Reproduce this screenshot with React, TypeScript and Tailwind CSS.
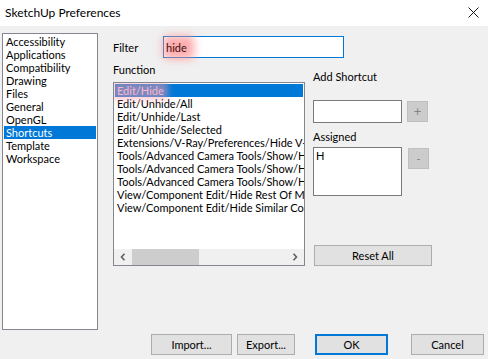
import React from "react";

const leftItems = [
  "Accessibility",
  "Applications",
  "Compatibility",
  "Drawing",
  "Files",
  "General",
  "OpenGL",
  "Shortcuts",
  "Template",
  "Workspace",
];

const functions = [
  "Edit/Hide",
  "Edit/Unhide/All",
  "Edit/Unhide/Last",
  "Edit/Unhide/Selected",
  "Extensions/V-Ray/Preferences/Hide V-Ray Toolbars",
  "Tools/Advanced Camera Tools/Show/Hide Cameras",
  "Tools/Advanced Camera Tools/Show/Hide Frustum Lines",
  "Tools/Advanced Camera Tools/Show/Hide Frustum Volumes",
  "View/Component Edit/Hide Rest Of Model",
  "View/Component Edit/Hide Similar Components",
];

function Btn({ label, className }: { label: string; className: string }) {
  return (
    <div
      className={
        "h-[21px] flex items-center justify-center bg-[#e1e1e1] border border-[#adadad] text-black " +
        className
      }
    >
      {label}
    </div>
  );
}

export default function App() {
  return (
    <div
      className="w-[488px] h-[359px] bg-[#f0f0f0] flex flex-col overflow-hidden text-[11px] leading-[13px] text-black"
      style={{ fontFamily: "Lato, 'Liberation Sans', sans-serif" }}
    >
      {/* Title bar */}
      <div className="h-[26px] bg-white flex items-center justify-between pl-[5px] pr-[9px] shrink-0">
        <span className="text-[12px] leading-[14px]">SketchUp Preferences</span>
        <svg width="11" height="11" viewBox="0 0 11 11" className="mt-[-1px]">
          <path d="M0.5 0.5 L10.5 10.5 M10.5 0.5 L0.5 10.5" stroke="#000" strokeWidth="0.9" />
        </svg>
      </div>

      <div className="flex flex-1 pt-[7px] pl-[2px]">
        {/* Left category list */}
        <div className="w-[96px] h-[297px] bg-white border border-[#828790] pt-px px-px shrink-0">
          {leftItems.map((it) => (
            <div
              key={it}
              className={
                "h-[13px] leading-[13px] pl-[2px] whitespace-nowrap " +
                (it === "Shortcuts" ? "bg-[#0078d7] text-white" : "")
              }
            >
              {it}
            </div>
          ))}
        </div>

        {/* Right area */}
        <div className="ml-[15px] flex flex-col">
          {/* Filter row */}
          <div className="flex items-center mt-[3px]">
            <div className="w-[50px]">Filter</div>
            <div className="w-[181px] h-[22px] bg-white border border-[#0078d7] flex items-center pl-[2px]">
              <span className="relative">
                <span className="absolute -left-[3px] -right-[7px] -top-[5px] -bottom-[5px] bg-[#ff8f8f] blur-[4px] opacity-75 rounded" />
                <span className="relative text-[#3a1010]">hide</span>
              </span>
            </div>
          </div>

          {/* Two columns */}
          <div className="flex mt-[5px]">
            {/* Function column */}
            <div className="flex flex-col">
              <div className="h-[13px]">Function</div>
              <div className="mt-[6px] w-[192px] h-[184px] bg-white border border-[#828790] flex flex-col">
                <div className="flex-1 pt-px px-px overflow-hidden">
                  {functions.map((f, i) => (
                    <div
                      key={f}
                      className={
                        "h-[13px] leading-[13px] pl-[2px] whitespace-nowrap " +
                        (i === 0 ? "bg-[#0078d7]" : "")
                      }
                    >
                      {i === 0 ? (
                        <span className="relative">
                          <span className="absolute -left-[6px] -right-[4px] -top-[3px] -bottom-[3px] bg-[#ff9aa8] blur-[3px] opacity-50 rounded" />
                          <span className="relative text-[#f6b6cc]">{f}</span>
                        </span>
                      ) : (
                        f
                      )}
                    </div>
                  ))}
                </div>
                {/* Horizontal scrollbar */}
                <div className="h-[16px] bg-[#f0f0f0] flex shrink-0">
                  <div className="w-[18px] flex items-center justify-center">
                    <svg width="6" height="8" viewBox="0 0 6 8">
                      <path d="M4.5 0.8 L1.5 4 L4.5 7.2" stroke="#606060" strokeWidth="1.6" fill="none" />
                    </svg>
                  </div>
                  <div className="flex-1">
                    <div className="w-[67px] h-full bg-[#cdcdcd]" />
                  </div>
                  <div className="w-[18px] flex items-center justify-center">
                    <svg width="6" height="8" viewBox="0 0 6 8">
                      <path d="M1.5 0.8 L4.5 4 L1.5 7.2" stroke="#606060" strokeWidth="1.6" fill="none" />
                    </svg>
                  </div>
                </div>
              </div>
            </div>

            {/* Shortcut column */}
            <div className="ml-[8px] flex flex-col">
              <div className="h-[13px] mt-[7px]">Add Shortcut</div>
              <div className="flex mt-[17px]">
                <div className="w-[89px] h-[23px] bg-white border border-[#7a7a7a]" />
                <div className="ml-[5px] mt-px w-[21px] h-[21px] bg-[#cccccc] border border-[#bfbfbf] flex items-center justify-center text-[#838383] text-[13px]">
                  +
                </div>
              </div>
              <div className="h-[13px] mt-[7px]">Assigned</div>
              <div className="flex mt-[4px]">
                <div className="w-[89px] h-[49px] bg-white border border-[#7a7a7a] pl-[2px] pt-px">H</div>
                <div className="ml-[6px] mt-px w-[21px] h-[21px] bg-[#cccccc] border border-[#bfbfbf] flex items-center justify-center text-[#838383]">
                  -
                </div>
              </div>
              <Btn label="Reset All" className="ml-px mt-[49px] w-[118px]" />
            </div>
          </div>

          {/* Bottom buttons */}
          <div className="flex mt-[68px]">
            <Btn label="Import..." className="ml-[38px] w-[81px]" />
            <Btn label="Export..." className="ml-[5px] w-[58px]" />
            <div className="ml-[20px] w-[73px] h-[21px] flex items-center justify-center bg-[#e1e1e1] border-2 border-[#0078d7]">
              OK
            </div>
            <Btn label="Cancel" className="ml-[23px] w-[73px]" />
          </div>
        </div>
      </div>
    </div>
  );
}
